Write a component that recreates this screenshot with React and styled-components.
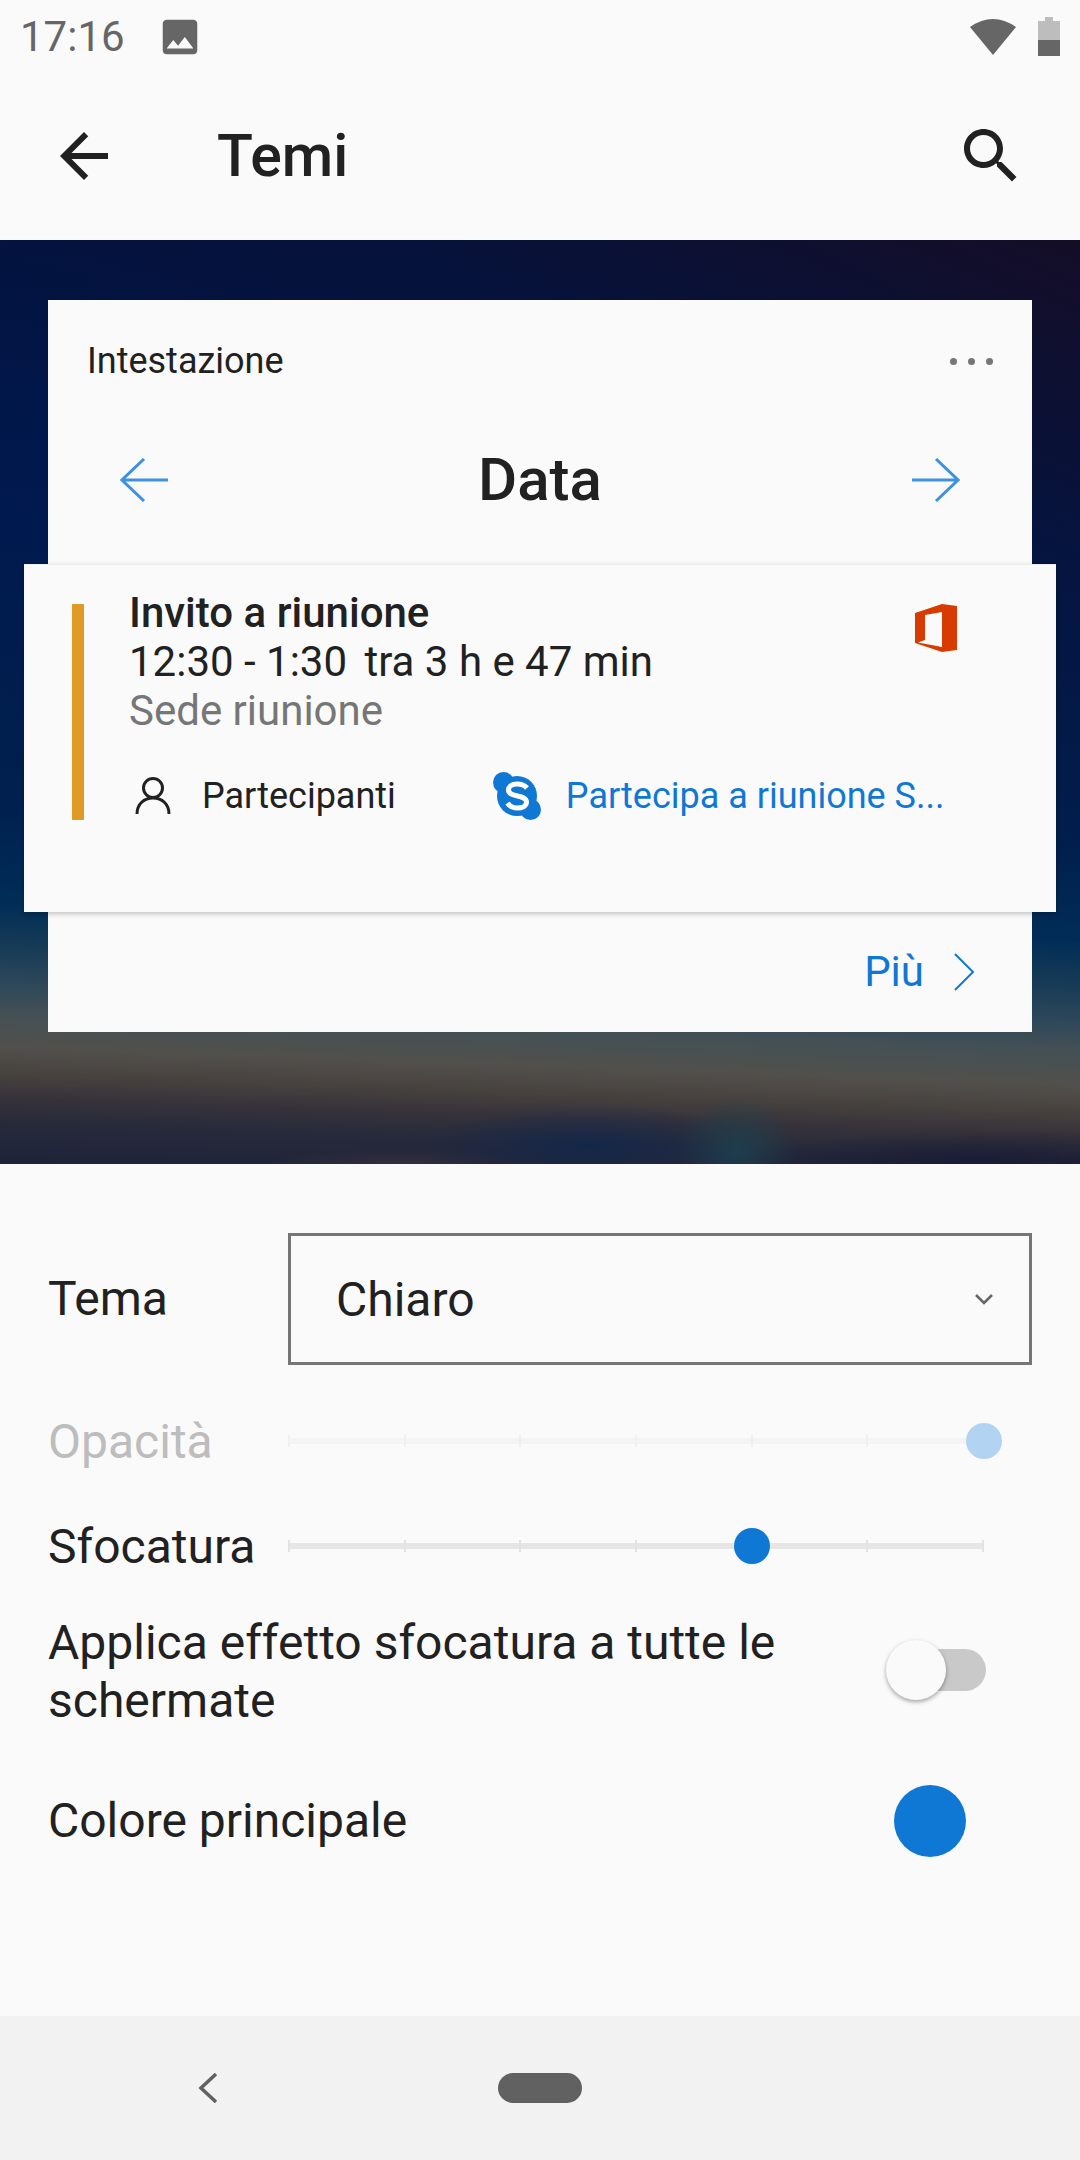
import React from 'react'
import styled, { createGlobalStyle } from 'styled-components'

const GlobalStyle = createGlobalStyle`
  html, body {
    margin: 0;
    padding: 0;
    background: #fafafa;
  }
  * {
    box-sizing: border-box;
  }
`

const Screen = styled.div`
  width: 1080px;
  height: 2160px;
  display: flex;
  flex-direction: column;
  background: #fafafa;
  color: #212121;
  font-family: Roboto, "Liberation Sans", sans-serif;
  overflow: hidden;
`

const StatusBar = styled.div`
  height: 73px;
  flex: none;
  display: flex;
  align-items: center;
  padding: 0 20px;
  color: #666;
`

const StatusTime = styled.span`
  font-size: 42px;
  line-height: 73px;
`

const StatusImage = styled.svg`
  width: 46px;
  height: 46px;
  margin-left: 32px;
  fill: #666;
`

const StatusRight = styled.div`
  margin-left: auto;
  display: flex;
  align-items: center;
  gap: 22px;
`

const Toolbar = styled.div`
  height: 167px;
  flex: none;
  display: flex;
  align-items: center;
  padding: 0 53px 2px 48px;
`

const ToolbarIcon = styled.svg`
  width: 72px;
  height: 72px;
  flex: none;
  fill: #212121;
`

const ToolbarTitle = styled.h1`
  margin: 0 0 0 97px;
  flex: 1;
  font-size: 59px;
  font-weight: 500;
  line-height: 72px;
`

const Hero = styled.div`
  height: 924px;
  flex: none;
  padding: 60px 48px 0;
  background:
    radial-gradient(ellipse 60px 55px at 737px 910px, rgba(28, 68, 82, 0.75), transparent),
    radial-gradient(ellipse 170px 40px at 590px 905px, rgba(14, 38, 78, 0.75), transparent),
    radial-gradient(ellipse 130px 14px at 400px 924px, rgba(60, 50, 62, 0.7), transparent),
    radial-gradient(ellipse 260px 35px at 980px 925px, rgba(22, 22, 52, 0.8), transparent),
    linear-gradient(205deg, rgba(22, 12, 36, 0.9) 0, rgba(10, 16, 50, 0.55) 280px, rgba(0, 0, 0, 0) 620px),
    linear-gradient(182deg, #021342 0, #00194e 300px, #00204f 600px, #002d57 700px, #183b55 745px, #2d475a 780px, #445055 810px, #52504c 845px, #48423f 870px, #36323a 895px, #272a3b 920px, #1f2339 961px);
`

const PreviewCard = styled.div`
  height: 732px;
  display: flex;
  flex-direction: column;
  background: #fafafa;
`

const CardHeader = styled.div`
  height: 264px;
  flex: none;
  padding: 2px 39px 0 39px;
`

const HeaderLine = styled.div`
  height: 118px;
  display: flex;
  align-items: center;
  justify-content: space-between;
`

const HeaderLabel = styled.span`
  font-size: 36px;
  line-height: 40px;
`

const Dots = styled.div`
  display: flex;
  gap: 11px;
`

const Dot = styled.i`
  width: 7px;
  height: 7px;
  border-radius: 50%;
  background: #767676;
`

const DateLine = styled.div`
  display: flex;
  align-items: center;
  justify-content: space-between;
  padding: 0 33px 0 33px;
  height: 120px;
`

const DateTitle = styled.span`
  font-size: 60px;
  font-weight: 500;
  line-height: 70px;
`

const EventCard = styled.div`
  height: 348px;
  flex: none;
  margin: 0 -24px;
  padding: 39px 0 0 48px;
  display: flex;
  background: #fafafa;
  border-top: 1px solid #eee;
  box-shadow: 0 2px 5px rgba(0, 0, 0, 0.22);
  position: relative;
`

const Stripe = styled.div`
  width: 12px;
  height: 216px;
  flex: none;
  background: #e09a26;
`

const EventBody = styled.div`
  flex: 1;
  padding-left: 45px;
  position: relative;
  margin-top: -16px;
`

const EventTitle = styled.div`
  font-size: 42px;
  font-weight: 500;
  line-height: 49px;
`

const EventLine = styled.div`
  font-size: 42px;
  line-height: 49px;
  color: ${(p) => (p.$muted ? '#767676' : '#212121')};
  white-space: pre;
`

const EventEta = styled.span`
  margin-left: 7px;
`

const OfficeLogo = styled.svg`
  position: absolute;
  top: 16px;
  right: 99px;
  width: 42px;
  height: 48px;
`

const EventActions = styled.div`
  display: flex;
  align-items: center;
  margin-top: 35px;
  height: 52px;
`

const ActionText = styled.span`
  font-size: 36px;
  line-height: 52px;
  color: ${(p) => (p.$link ? '#0f78d4' : '#212121')};
`

const PersonIcon = styled.svg`
  width: 36px;
  height: 38px;
  margin: 0 31px 0 6px;
  flex: none;
`

const SkypeLogo = styled.svg`
  width: 48px;
  height: 48px;
  flex: none;
  margin: 0 25px 0 97px;
`

const CardFooter = styled.div`
  flex: 1;
  display: flex;
  align-items: center;
  justify-content: flex-end;
  gap: 29px;
  padding: 0 57px 0 0;
  color: #0f78d4;
`

const MoreText = styled.span`
  font-size: 42px;
  line-height: 48px;
`

const Controls = styled.div`
  flex: 1;
  padding: 69px 48px 0;
`

const Row = styled.div`
  display: grid;
  grid-template-columns: 240px 1fr;
  align-items: center;
  height: ${(p) => p.$h}px;
  margin-bottom: ${(p) => p.$mb || 0}px;
`

const Label = styled.span`
  font-size: 48px;
  line-height: 58px;
  color: ${(p) => (p.$off ? '#bdbdbd' : '#212121')};
`

const Select = styled.div`
  height: 132px;
  border: 3px solid #757575;
  display: flex;
  align-items: center;
  justify-content: space-between;
  padding: 0 36px 0 45px;
  font-size: 48px;
`

const Track = styled.div`
  position: relative;
  width: 696px;
  height: 6px;
  margin-top: -2px;
  display: flex;
  align-items: center;
  justify-content: space-between;
  background: ${(p) => (p.$off ? '#f4f4f4' : '#e6e6e6')};
`

const Tick = styled.i`
  width: 2px;
  height: 12px;
  background: ${(p) => (p.$off ? '#f0f0f0' : '#e2e2e2')};
`

const Thumb = styled.div`
  position: absolute;
  top: -15px;
  left: calc(${(p) => p.$at}% - 18px);
  width: 36px;
  height: 36px;
  border-radius: 50%;
  background: ${(p) => (p.$off ? '#b3d3f2' : '#0f78d4')};
`

const SwitchRow = styled.div`
  display: flex;
  align-items: center;
  justify-content: space-between;
  height: 116px;
  padding-right: 46px;
  margin-bottom: 55px;
`

const SwitchLabel = styled(Label)`
  width: 780px;
`

const Switch = styled.div`
  position: relative;
  width: 100px;
  height: 42px;
  margin-bottom: 4px;
  flex: none;
`

const SwitchTrack = styled.div`
  margin-left: 19px;
  width: 81px;
  height: 42px;
  border-radius: 21px;
  background: #c9c9c9;
`

const SwitchKnob = styled.div`
  position: absolute;
  top: -9px;
  left: 0;
  width: 60px;
  height: 60px;
  border-radius: 50%;
  background: #fafafa;
  box-shadow: 0 2px 4px rgba(0, 0, 0, 0.35);
`

const ColorRow = styled.div`
  display: flex;
  align-items: center;
  justify-content: space-between;
  height: 72px;
  padding-right: 66px;
`

const ColorDot = styled.div`
  width: 72px;
  height: 72px;
  border-radius: 50%;
  background: #0f78d4;
`

const NavBar = styled.div`
  height: 144px;
  flex: none;
  display: grid;
  grid-template-columns: 498px 84px;
  align-items: center;
  background: #f2f2f2;
`

const NavBack = styled.svg`
  width: 20px;
  height: 30px;
  margin-left: 198px;
`

const NavPill = styled.div`
  width: 84px;
  height: 30px;
  border-radius: 15px;
  background: #616161;
`

function ArrowLong ({ flip }) {
  return (
    <svg width='48' height='44' viewBox='0 0 48 44' fill='none' stroke='#3f92e0' strokeWidth='3'>
      {flip
        ? <path d='M0 22H46M24 1L46 22L24 43' />
        : <path d='M48 22H2M24 1L2 22L24 43' />}
    </svg>
  )
}

function Slider ({ value, off }) {
  return (
    <Track $off={off}>
      {[0, 1, 2, 3, 4, 5, 6].map((i) => <Tick key={i} $off={off} />)}
      <Thumb $at={value} $off={off} />
    </Track>
  )
}

export default function App () {
  return (
    <Screen>
      <GlobalStyle />
      <StatusBar>
        <StatusTime>17:16</StatusTime>
        <StatusImage viewBox='0 0 24 24'>
          <path d='M21 19V5c0-1.1-.9-2-2-2H5c-1.1 0-2 .9-2 2v14c0 1.1.9 2 2 2h14c1.1 0 2-.9 2-2zM8.5 13.5l2.5 3.01L14.5 12l4.5 6H5l3.5-4.5z' />
        </StatusImage>
        <StatusRight>
          <svg width='46' height='36' viewBox='0 0 46 36'>
            <path d='M0 8Q23 -8 46 8L23 36Z' fill='#666' />
          </svg>
          <svg width='22' height='39' viewBox='0 0 22 39'>
            <path d='M7 0H15V4H22V23H0V4H7Z' fill='#bdbdbd' />
            <path d='M0 23H22V39H0Z' fill='#666' />
          </svg>
        </StatusRight>
      </StatusBar>

      <Toolbar>
        <ToolbarIcon viewBox='0 0 24 24'>
          <path d='M20 11H7.83l5.59-5.59L12 4l-8 8 8 8 1.41-1.41L7.83 13H20v-2z' />
        </ToolbarIcon>
        <ToolbarTitle>Temi</ToolbarTitle>
        <ToolbarIcon viewBox='0 0 24 24'>
          <path d='M15.5 14h-.79l-.28-.27C15.41 12.59 16 11.11 16 9.5 16 5.91 13.09 3 9.5 3S3 5.91 3 9.5 5.91 16 9.5 16c1.61 0 3.09-.59 4.23-1.57l.27.28v.79l5 4.99L20.49 19l-4.99-5zm-6 0C7.01 14 5 11.99 5 9.5S7.01 5 9.5 5 14 7.01 14 9.5 11.99 14 9.5 14z' />
        </ToolbarIcon>
      </Toolbar>

      <Hero>
        <PreviewCard>
          <CardHeader>
            <HeaderLine>
              <HeaderLabel>Intestazione</HeaderLabel>
              <Dots><Dot /><Dot /><Dot /></Dots>
            </HeaderLine>
            <DateLine>
              <ArrowLong />
              <DateTitle>Data</DateTitle>
              <ArrowLong flip />
            </DateLine>
          </CardHeader>

          <EventCard>
            <Stripe />
            <EventBody>
              <EventTitle>Invito a riunione</EventTitle>
              <EventLine>12:30 - 1:30 <EventEta>tra 3 h e 47 min</EventEta></EventLine>
              <EventLine $muted>Sede riunione</EventLine>
              <OfficeLogo viewBox='0 0 42 48'>
                <path
                  fillRule='evenodd'
                  d='M0 9L27 0L42 2V46L27 48L0 39ZM10 11V36L3 38.5L27 43V8Z'
                  fill='#d83b01'
                />
              </OfficeLogo>
              <EventActions>
                <PersonIcon viewBox='0 0 36 38' fill='none' stroke='#212121' strokeWidth='3'>
                  <circle cx='18' cy='11' r='9.5' />
                  <path d='M2 37C2 27 9 21 18 21S34 27 34 37' />
                </PersonIcon>
                <ActionText>Partecipanti</ActionText>
                <SkypeLogo viewBox='0 0 48 48'>
                  <g fill='#0f78d4'>
                    <circle cx='24' cy='24' r='20' />
                    <circle cx='10.5' cy='10.5' r='10.5' />
                    <circle cx='37.5' cy='37.5' r='10.5' />
                  </g>
                  <path
                    d='M34 16C31 12.5 27 12 24 12C18 12 15.5 15 15.5 18C15.5 26 33.5 22 33.5 30C33.5 34 29.5 36 24 36C20 36 16.5 34 14.5 31'
                    fill='none'
                    stroke='#fff'
                    strokeWidth='5'
                  />
                </SkypeLogo>
                <ActionText $link>Partecipa a riunione S...</ActionText>
              </EventActions>
            </EventBody>
          </EventCard>

          <CardFooter>
            <MoreText>Più</MoreText>
            <svg width='22' height='38' viewBox='0 0 22 38' fill='none' stroke='#0f78d4' strokeWidth='2'>
              <path d='M2 1L20 19L2 37' />
            </svg>
          </CardFooter>
        </PreviewCard>
      </Hero>

      <Controls>
        <Row $h={132} $mb={47}>
          <Label>Tema</Label>
          <Select>
            Chiaro
            <svg width='18' height='11' viewBox='0 0 18 11' fill='none' stroke='#666' strokeWidth='2.5'>
              <path d='M1 1L9 9L17 1' />
            </svg>
          </Select>
        </Row>
        <Row $h={60} $mb={45}>
          <Label $off>Opacità</Label>
          <Slider value={100} off />
        </Row>
        <Row $h={60} $mb={37}>
          <Label>Sfocatura</Label>
          <Slider value={66.67} />
        </Row>
        <SwitchRow>
          <SwitchLabel>Applica effetto sfocatura a tutte le schermate</SwitchLabel>
          <Switch>
            <SwitchTrack />
            <SwitchKnob />
          </Switch>
        </SwitchRow>
        <ColorRow>
          <Label>Colore principale</Label>
          <ColorDot />
        </ColorRow>
      </Controls>

      <NavBar>
        <NavBack viewBox='0 0 20 30' fill='none' stroke='#616161' strokeWidth='3.5'>
          <path d='M18 1L3 15L18 29' />
        </NavBack>
        <NavPill />
      </NavBar>
    </Screen>
  )
}
